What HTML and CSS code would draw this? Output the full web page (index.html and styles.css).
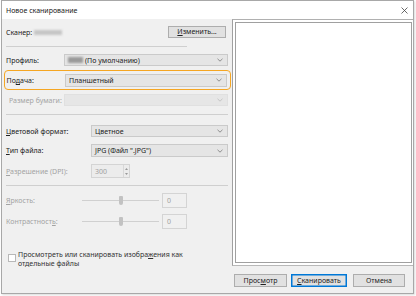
FILE: index.html
```html
<!DOCTYPE html>
<html lang="ru">
<head>
<meta charset="utf-8">
<title>Новое сканирование</title>
<link rel="stylesheet" href="styles.css">
</head>
<body>
<div class="window">
  <div class="titlebar">
    <span class="title">Новое сканирование</span>
    <svg class="close" width="7" height="7" viewBox="0 0 7 7"><path d="M0.5 0.5L6.5 6.5M6.5 0.5L0.5 6.5" stroke="#444" stroke-width="0.8" fill="none"/></svg>
  </div>
  <div class="content">
    <div class="left">
      <div class="row r-scanner">
        <span class="lbl-auto">Сканер:</span>
        <span class="blur blur-name"></span>
        <span class="spacer"></span>
        <button class="btn btn-change"><u>И</u>зменить...</button>
      </div>
      <div class="sep sep-short"></div>
      <div class="row r-profile">
        <span class="lbl lbl-a">Профиль:</span>
        <div class="select"><span class="blur blur-chip"></span><span>(По умолчанию)</span><span class="spacer"></span><svg class="chev" width="6" height="4" viewBox="0 0 6 4"><path d="M0.5 0.8L3 3.2L5.5 0.8" stroke="#777" stroke-width="0.8" fill="none"/></svg></div>
      </div>
      <div class="highlight">
        <span class="lbl lbl-a2">По<u>д</u>ача:</span>
        <div class="select"><span>Планшетный</span><span class="spacer"></span><svg class="chev" width="6" height="4" viewBox="0 0 6 4"><path d="M0.5 0.8L3 3.2L5.5 0.8" stroke="#777" stroke-width="0.8" fill="none"/></svg></div>
      </div>
      <div class="row r-paper">
        <span class="lbl lbl-a disabled lbl-indent">Размер бумаги:</span>
        <div class="select select-disabled"><span class="spacer"></span><svg class="chev" width="6" height="4" viewBox="0 0 6 4"><path d="M0.5 0.8L3 3.2L5.5 0.8" stroke="#bbb" stroke-width="0.8" fill="none"/></svg></div>
      </div>
      <div class="sep sep-2"></div>
      <div class="row r-color">
        <span class="lbl lbl-b"><u>Ц</u>ветовой формат:</span>
        <div class="select"><span>Цветное</span><span class="spacer"></span><svg class="chev" width="6" height="4" viewBox="0 0 6 4"><path d="M0.5 0.8L3 3.2L5.5 0.8" stroke="#777" stroke-width="0.8" fill="none"/></svg></div>
      </div>
      <div class="row r-type">
        <span class="lbl lbl-b"><u>Т</u>ип файла:</span>
        <div class="select"><span>JPG (Файл ".JPG")</span><span class="spacer"></span><svg class="chev" width="6" height="4" viewBox="0 0 6 4"><path d="M0.5 0.8L3 3.2L5.5 0.8" stroke="#777" stroke-width="0.8" fill="none"/></svg></div>
      </div>
      <div class="row r-dpi">
        <span class="lbl lbl-b disabled"><u>Р</u>азрешение (DPI):</span>
        <div class="spin"><span class="spin-val">300</span><span class="spin-btns"><svg width="3" height="2" viewBox="0 0 3 2"><path d="M0 2L1.5 0L3 2Z" fill="#999"/></svg><svg width="3" height="2" viewBox="0 0 3 2"><path d="M0 0L1.5 2L3 0Z" fill="#999"/></svg></span></div>
      </div>
      <div class="sep sep-3"></div>
      <div class="row r-bright">
        <span class="lbl lbl-c disabled"><u>Я</u>ркость:</span>
        <div class="slider"><span class="track"></span><span class="thumb"></span></div>
        <div class="valbox">0</div>
      </div>
      <div class="row r-contrast">
        <span class="lbl lbl-c disabled">Контрастност<u>ь</u>:</span>
        <div class="slider"><span class="track"></span><span class="thumb"></span></div>
        <div class="valbox">0</div>
      </div>
      <div class="check-row">
        <span class="checkbox"></span>
        <span class="check-text">Просмотреть или сканировать изобра<u>ж</u>ения как<br>отдельные файлы</span>
      </div>
    </div>
    <div class="right">
      <div class="preview"><div class="preview-inner"></div></div>
      <div class="buttons">
        <button class="btn btn-preview">Прос<u>м</u>отр</button>
        <button class="btn btn-scan"><u>С</u>канировать</button>
        <button class="btn btn-cancel">Отмена</button>
      </div>
    </div>
  </div>
</div>
</body>
</html>
```

FILE: styles.css
```css
* { box-sizing: border-box; }
html, body { margin: 0; padding: 0; background: #ffffff; }
body {
  font-family: "Noto Sans", "Open Sans", sans-serif;
  font-size: 7px;
  color: #222222;
  width: 416px;
  height: 296px;
  overflow: hidden;
}
u { text-decoration-thickness: 0.5px; text-underline-offset: 1px; }

.window {
  margin-left: 1px;
  width: 413px;
  height: 294px;
  border: 1px solid #a8a8a8;
  display: flex;
  flex-direction: column;
  background: #f0f0f0;
  box-shadow: 1px 1px 2px rgba(0,0,0,0.15);
}
.titlebar {
  height: 18px;
  background: #ffffff;
  display: flex;
  align-items: center;
  padding: 0 4px 0 4px;
  flex: none;
}
.title { flex: 1; color: #222; }
.close { margin-right: 1px; }

.content { flex: 1; display: flex; min-height: 0; }
.left {
  width: 230px;
  padding: 0 4px 0 4px;
  display: flex;
  flex-direction: column;
}
.row { display: flex; align-items: center; }
.spacer { flex: 1; }
.lbl { flex: none; white-space: nowrap; }
.lbl-a { width: 58px; }
.lbl-b { width: 85px; }
.lbl-c { width: 76px; }
.lbl-indent { padding-left: 3px; }
.disabled { color: #a3a3a3; }

.r-scanner { margin-top: 7px; height: 12px; }
.lbl-auto { margin-right: 2px; }
.blur { display: inline-block; background: #c6c6c6; filter: blur(1px); }
.blur-name { width: 28px; height: 5px; }
.blur-chip { width: 15px; height: 6px; margin-right: 2px; background: #9a9a9a; }

.btn {
  font-family: inherit;
  font-size: 7px;
  color: #222222;
  background: #e1e1e1;
  border: 1px solid #adadad;
  padding: 0;
  margin: 0;
  height: 12px;
  line-height: 10px;
}
.btn-change { width: 58px; margin-right: 2px; }

.sep { border-top: 1px solid #cfcfcf; flex: none; height: 0; }
.sep-short { margin-top: 8px; width: 181px; }
.sep-2 { margin-top: 8px; }
.sep-3 { margin-top: 7px; }

.select {
  flex: 1;
  height: 12px;
  background: #e5e5e5;
  border: 1px solid #cacaca;
  display: flex;
  align-items: center;
  padding: 0 4px 0 3px;
  white-space: nowrap;
}
.select-disabled { background: #e6e6e6; border-color: #e0e0e0; }
.chev { flex: none; }

.r-profile { margin-top: 7px; }
.highlight {
  margin-top: 4px;
  margin-left: -2px;
  width: 227px;
  height: 20px;
  border: 1.5px solid #f5a623;
  border-radius: 4px;
  display: flex;
  align-items: center;
  padding: 0 3px 0 1.5px;
}
.lbl-a2 { width: 58.5px; }
.highlight .select { height: 13px; }
.r-paper { margin-top: 4px; }
.r-paper .select { height: 12px; }

.r-color { margin-top: 10px; }
.r-type { margin-top: 7px; }
.r-type .select { height: 13px; }
.r-dpi { margin-top: 7px; }

.spin {
  width: 39px;
  height: 14px;
  background: #ececec;
  border: 1px solid #d4d4d4;
  display: flex;
  align-items: center;
  padding-left: 3px;
  color: #a0a0a0;
}
.spin-val { flex: 1; }
.spin-btns {
  width: 6px;
  height: 12px;
  border-left: 1px solid #d8d8d8;
  display: flex;
  flex-direction: column;
  align-items: center;
  justify-content: space-around;
  padding: 1px 0;
}
.spin-btns svg { display: block; }

.r-bright { margin-top: 7px; height: 15px; }
.r-contrast { margin-top: 6px; height: 15px; }
.slider {
  width: 77px;
  height: 15px;
  position: relative;
  margin-right: 3px;
}
.track {
  position: absolute;
  left: 0; right: 0; top: 7px;
  height: 1px;
  background: #d0d0d0;
}
.thumb {
  position: absolute;
  left: 37px; top: 3px;
  width: 4px; height: 9px;
  background: #c2c2c2;
  border-radius: 1px 1px 2px 2px;
}
.valbox {
  width: 25px;
  height: 15px;
  border: 1px solid #d4d4d4;
  background: #f0f0f0;
  color: #a0a0a0;
  padding-left: 4px;
  display: flex;
  align-items: center;
}

.check-row {
  margin-top: 22px;
  display: flex;
  align-items: flex-start;
  padding-left: 2px;
}
.checkbox {
  flex: none;
  width: 8px; height: 8px;
  border: 1px solid #b8b8b8;
  background: #ffffff;
  margin-top: 3px;
  margin-right: 2px;
}
.check-text { line-height: 8.5px; color: #333; }

.right {
  flex: 1;
  display: flex;
  flex-direction: column;
}
.preview {
  flex: 1;
  border-left: 1px solid #a0a0a0;
  border-bottom: 1px solid #b8b8b8;
  border-top: 1px solid #b0b0b0;
  background: #ffffff;
  padding: 2px 1px 2px 2px;
}
.preview-inner {
  height: 100%;
  border: 1px solid #a0a0a0;
}
.buttons {
  height: 27px;
  flex: none;
  display: flex;
  align-items: center;
  padding-left: 2px;
  padding-top: 2px;
}
.buttons .btn { height: 13px; }
.btn-preview { width: 53px; margin-right: 4px; }
.btn-scan { width: 56px; margin-right: 6px; border-color: #0078d7; box-shadow: inset 0 0 0 0.5px #0078d7; }
.btn-cancel { width: 52px; }
```
